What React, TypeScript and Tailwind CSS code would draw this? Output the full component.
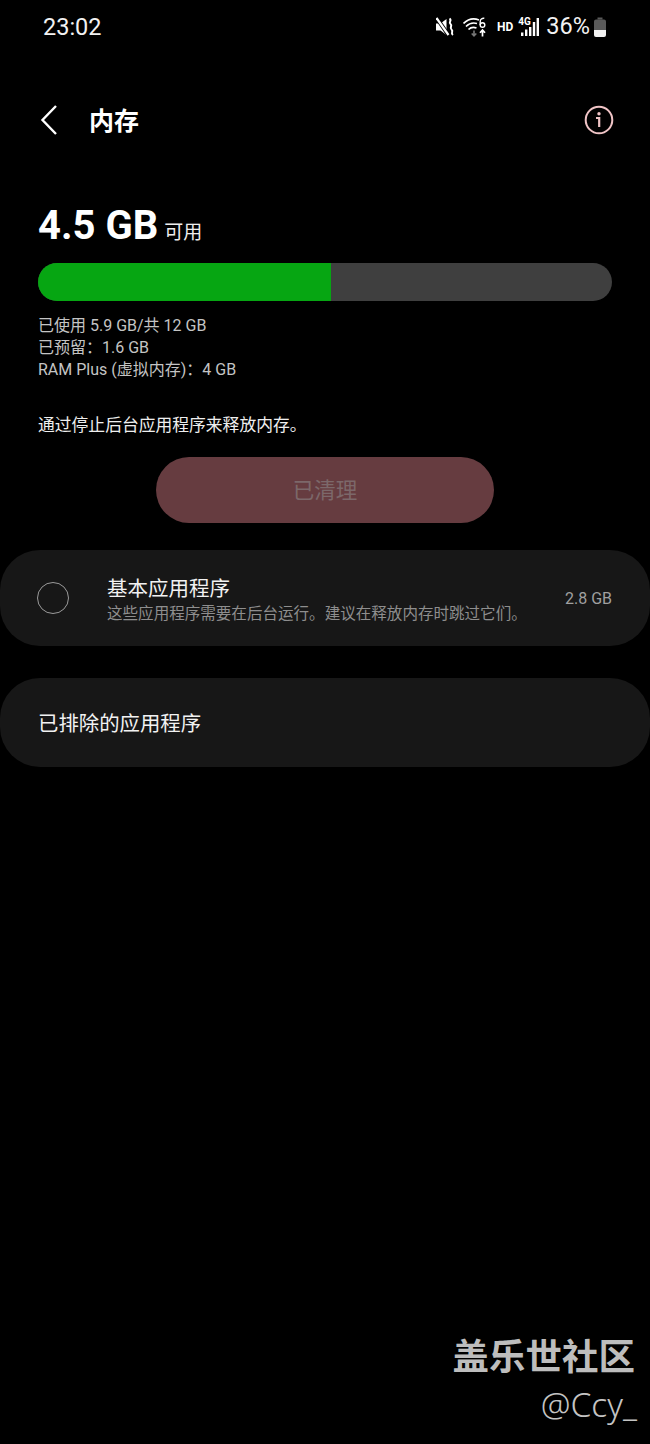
const font = "font-['Roboto','Noto_Sans_CJK_SC',sans-serif]";

function Mute() {
  return (
    <svg width="19" height="20" viewBox="0 0 19 20" fill="none">
      <path d="M0 6.500h4.500L10.500 2v16L4.500 13.500H0z" fill="#fff" />
      <path d="M0 0l13 19" stroke="#000" strokeWidth="4" />
      <path d="M0.500 1l12 17" stroke="#fff" strokeWidth="2.200" />
      <path d="M13.500 1.500c3 2 -1.500 3.500 1 5.500s-1.500 3.500 1 5.500 -1.500 3.500 1.500 5.500" stroke="#fff" strokeWidth="2" />
    </svg>
  );
}

function Wifi() {
  return (
    <svg width="24" height="20" viewBox="0 0 24 20" fill="none">
      <path d="M0.500 6.500C5.500 1.500 11 1 16 3" stroke="#fff" strokeWidth="1.700" />
      <path d="M3 9.500C6.500 6 10.500 5.500 14 6.500" stroke="#fff" strokeWidth="1.700" />
      <path d="M5.500 12.500C7.500 10.500 11 10 13.500 11" stroke="#fff" strokeWidth="1.700" />
      <path d="M11 13.500v5M8.700 16.500l2.300 2.300 2.300-2.300" stroke="#777" strokeWidth="1.600" />
      <path d="M19.500 19.500v-6M17 15.800l2.500-2.800 2.500 2.800" stroke="#fff" strokeWidth="1.700" />
      <circle cx="19.500" cy="8" r="2.300" stroke="#fff" strokeWidth="1.400" />
      <path d="M17.200 8V4.500C17.200 2.500 19 1 21.300 1.300" stroke="#fff" strokeWidth="1.400" />
    </svg>
  );
}

function Signal() {
  return (
    <svg width="18" height="20" viewBox="0 0 18 20" fill="#fff">
      <rect x="0" y="15.500" width="2.400" height="3.500" />
      <rect x="4" y="12.500" width="2.400" height="6.500" />
      <rect x="8" y="9" width="2.400" height="10" />
      <rect x="11.800" y="5" width="2.400" height="14" />
      <rect x="15.600" y="1" width="2.400" height="18" />
    </svg>
  );
}

function Battery() {
  return (
    <svg width="14" height="21" viewBox="0 0 14 21">
      <path d="M4.500 0.500h5v2h-5z" fill="#5a5a5a" />
      <path d="M1 4.500a2 2 0 0 1 2-2h8a2 2 0 0 1 2 2V13H1z" fill="#5a5a5a" />
      <path d="M1 13h12v5a2 2 0 0 1-2 2H3a2 2 0 0 1-2-2z" fill="#f2f2f2" />
    </svg>
  );
}

export default function App() {
  return (
    <div className={`relative h-[1444px] w-full overflow-hidden bg-black text-white ${font}`}>
      <div className="flex h-[54px] items-center justify-between pl-[43px] pr-[43px]">
        <span className="pt-[2px] text-[23.500px] leading-none text-[#f2f2f2]">23:02</span>
        <div className="flex items-center">
          <Mute />
          <span className="ml-[8px] flex"><Wifi /></span>
          <span className="ml-[10px] text-[12px] font-bold leading-none">HD</span>
          <span className="relative ml-[5px] flex h-5 w-[21px] justify-end">
            <Signal />
            <span className="absolute -top-[1px] left-0 bg-black pr-[1px] text-[10px] font-bold leading-[11px]">4G</span>
          </span>
          <span className="ml-[7px] text-[23.500px] leading-none text-[#f2f2f2]">36%</span>
          <span className="ml-[3px] flex"><Battery /></span>
        </div>
      </div>

      <div className="mt-[39px] flex h-[54px] items-center pl-[38px] pr-[36px]">
        <svg width="20" height="32" viewBox="0 0 20 32" fill="none">
          <path d="M18 2L4.500 16 18 30" stroke="#fff" strokeWidth="2.400" />
        </svg>
        <span className="ml-[31px] pt-[2px] text-[25px] font-bold leading-none">内存</span>
        <svg className="ml-auto" width="30" height="30" viewBox="0 0 30 30" fill="none">
          <circle cx="15" cy="15" r="13.300" stroke="#f0c4c6" strokeWidth="2" />
          <circle cx="15" cy="8.800" r="1.700" fill="#f0c4c6" />
          <path d="M12 13h3.200v9" stroke="#f0c4c6" strokeWidth="2.200" />
        </svg>
      </div>

      <div className="mt-[54px] flex items-end pl-[38px]">
        <span className="text-[40px] font-bold leading-[50px]">4.5 GB</span>
        <span className="mb-[6px] ml-[6px] text-[19px] leading-[24px] text-[#eeeeee]">可用</span>
      </div>

      <div className="mx-[38px] mt-[12px] h-[38px] overflow-hidden rounded-full bg-[#3f3f3f]">
        <div className="h-full w-[293px] bg-[#06a612]" />
      </div>

      <div className="ml-[38px] mt-[14px] text-[16px] leading-[22px] text-[#c4c4c4]">
        <p>已使用 5.9 GB/共 12 GB</p>
        <p>已预留：1.6 GB</p>
        <p>RAM Plus (虚拟内存)：4 GB</p>
      </div>

      <p className="ml-[38px] mt-[32px] text-[16.800px] leading-[24px] text-[#efefef]">通过停止后台应用程序来释放内存。</p>

      <div className="mt-[20px] flex justify-center">
        <div className="flex h-[66px] w-[338px] items-center justify-center rounded-full bg-[#663c40] pt-[3px] text-[21.500px] text-[#7c686a]">
          已清理
        </div>
      </div>

      <div className="mt-[27px] flex h-[96px] items-center rounded-[40px] bg-[#171717] pl-[37px] pr-[38px]">
        <span className="h-[32px] w-[32px] rounded-full border-[1.500px] border-[#9a9a9a]" />
        <div className="ml-[38px] flex-1 pt-[5px]">
          <p className="text-[20.500px] leading-[27px] text-[#f2f2f2]">基本应用程序</p>
          <p className="text-[15.550px] leading-[23px] text-[#8e8e8e]">这些应用程序需要在后台运行。建议在释放内存时跳过它们。</p>
        </div>
        <span className="pt-[2px] text-[16px] text-[#a0a0a0]">2.8 GB</span>
      </div>

      <div className="mt-[32px] flex h-[89px] items-center rounded-[40px] bg-[#171717] pl-[38px] pt-[3px] text-[20.400px] text-[#f2f2f2]">
        已排除的应用程序
      </div>

      <div className="absolute right-[15px] top-[1335px] flex flex-col items-end text-[#bdbdbd]">
        <span className="text-[36.500px] font-bold leading-[46px]">盖乐世社区</span>
        <span className="-mr-[2px] mt-[3px] font-['Noto_Sans',sans-serif] text-[33.500px] font-light leading-[40px] text-[#c4c4c4]">@Ccy_</span>
      </div>
    </div>
  );
}
